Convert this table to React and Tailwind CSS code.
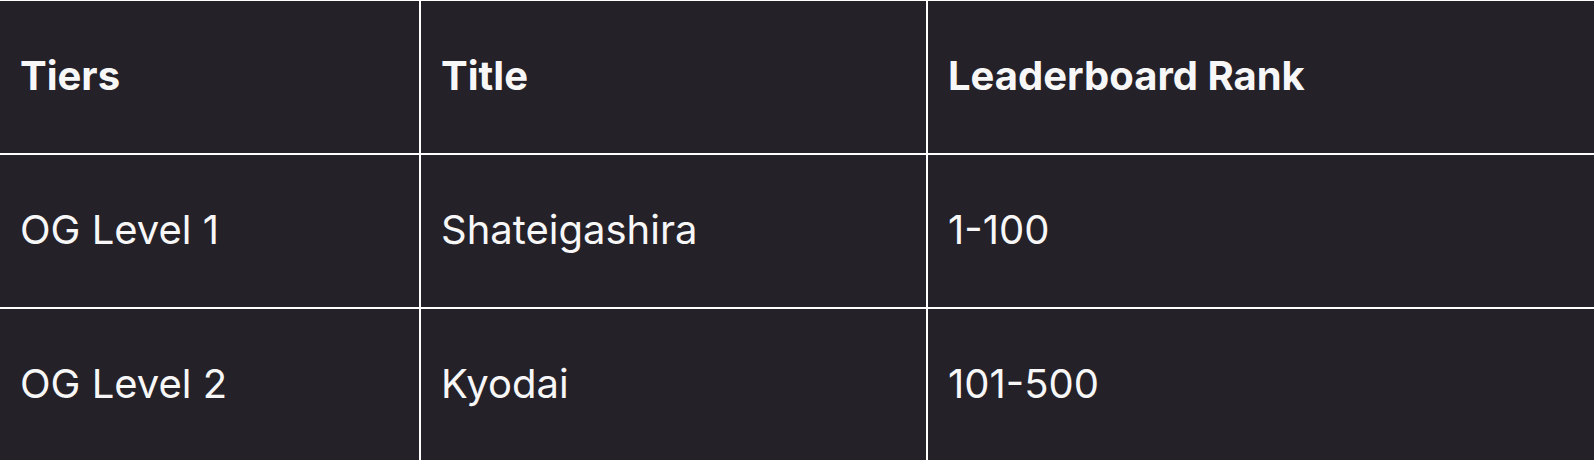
const HEAD = ['Tiers', 'Title', 'Leaderboard Rank']

const ROWS = [
  ['OG Level 1', 'Shateigashira', '1-100'],
  ['OG Level 2', 'Kyodai', '101-500'],
]

function Cell({ children, head }) {
  return (
    <div
      className={`bg-[#252129] h-[152px] flex items-center px-5 pb-0.5 text-[40px] text-[#f7f7f8] ${
        head ? 'font-bold' : 'font-normal'
      }`}
    >
      {children}
    </div>
  )
}

export default function App() {
  return (
    <div
      className="min-h-screen bg-[#252129] overflow-hidden"
      style={{ fontFamily: 'Inter, "Noto Sans", sans-serif' }}
    >
      {/* white gaps act as the table rules */}
      <div className="grid grid-cols-[419px_505px_1fr] gap-[2px] bg-white pt-px">
        {HEAD.map((h) => (
          <Cell key={h} head>
            {h}
          </Cell>
        ))}
        {ROWS.map((row) =>
          row.map((c, i) => <Cell key={row[0] + i}>{c}</Cell>)
        )}
      </div>
    </div>
  )
}
